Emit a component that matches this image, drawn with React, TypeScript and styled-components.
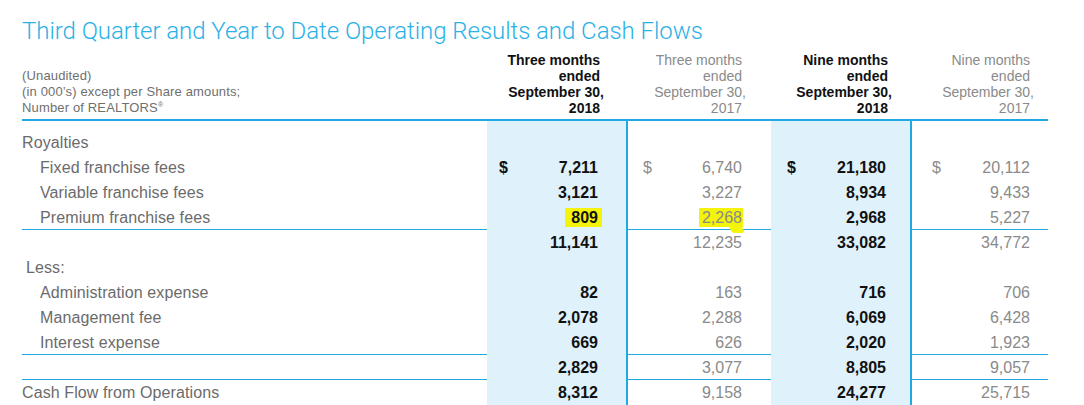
import styled, { createGlobalStyle } from "styled-components";

const GlobalStyle = createGlobalStyle`
  body {
    margin: 0;
    background: #ffffff;
    font-family: "Liberation Sans", Arial, sans-serif;
  }
`;

const BLUE = "#1fa9e1";
const BAND = "#dff1fb";
const COLS = "465px 141px 143px 141px 136px";

// per column: [padding-left, padding-right]
const PAD: [number, number][] = [
  [12, 28],
  [15, 29],
  [16, 24],
  [20, 18],
];

const Page = styled.div`
  padding: 19px 0 0 22px;
  width: 1026px;
  overflow: hidden;
  height: 386px;
`;

const Title = styled.h1`
  margin: 0;
  font-family: Roboto, "Liberation Sans", sans-serif;
  font-weight: 300;
  font-size: 24px;
  line-height: 24px;
  letter-spacing: -0.05px;
  color: #2ab1e6;
`;

const Head = styled.div`
  display: grid;
  grid-template-columns: ${COLS};
  margin-top: 9px;
  padding-bottom: 3px;
  border-bottom: 2px solid ${BLUE};
  align-items: end;
`;

const Caption = styled.div`
  font-size: 13px;
  line-height: 16px;
  color: #6f6f6f;
  letter-spacing: 0.15px;

  sup {
    font-size: 7px;
    line-height: 0;
    vertical-align: 5px;
  }
`;

const ColHead = styled.div<{ $col: number; $current?: boolean }>`
  text-align: right;
  font-size: 14px;
  line-height: 16px;
  padding-right: ${(p) => PAD[p.$col][1]}px;
  font-weight: ${(p) => (p.$current ? 700 : 400)};
  color: ${(p) => (p.$current ? "#111111" : "#8a8a8a")};
`;

const Hang = styled.span`
  margin-right: -4px;
`;

const Body = styled.div`
  display: flex;
  flex-direction: column;
`;

const Row = styled.div<{ $rule?: boolean; $h?: number }>`
  display: grid;
  grid-template-columns: ${COLS};
  height: ${(p) => p.$h ?? 25}px;
  box-sizing: border-box;
  border-bottom: ${(p) => (p.$rule ? `1px solid ${BLUE}` : "none")};
`;

const Label = styled.div<{ $indent?: number }>`
  font-size: 16px;
  line-height: 25px;
  letter-spacing: 0.1px;
  color: #6b6b6b;
  padding-left: ${(p) => p.$indent ?? 0}px;
  white-space: nowrap;
`;

const Cell = styled.div<{ $col: number }>`
  display: flex;
  align-items: center;
  box-sizing: border-box;
  padding: 0 ${(p) => PAD[p.$col][1]}px 0 ${(p) => PAD[p.$col][0]}px;
  font-size: 16px;
  line-height: 25px;
  white-space: nowrap;
  background: ${(p) => (p.$col % 2 === 0 ? BAND : "transparent")};
  border-right: ${(p) => (p.$col % 2 === 0 ? `2px solid ${BLUE}` : "none")};
  font-weight: ${(p) => (p.$col % 2 === 0 ? 700 : 400)};
  color: ${(p) => (p.$col % 2 === 0 ? "#111111" : "#8a8a8a")};
`;

const Dollar = styled.span``;

const Amount = styled.span`
  margin-left: auto;
`;

const Marker = styled.span<{ $tail?: boolean }>`
  position: relative;
  background: #f3f30c;
  padding: 1px 4px 1px 6px;
  margin-right: -4px;

  ${(p) =>
    p.$tail &&
    `
    padding: 1px 1px 1px 3px;
    margin-right: -1px;
    &::after {
      content: "";
      position: absolute;
      right: 0;
      bottom: -6px;
      width: 13px;
      height: 8px;
      background: #f3f30c;
      transform: skewX(25deg);
      border-radius: 0 0 3px 3px;
    }
  `}
`;

type Value = string | { v: string; mark?: "box" | "tail" };

interface Line {
  label: string;
  indent?: number;
  values?: Value[];
  dollar?: boolean;
  rule?: boolean;
}

const lines: Line[] = [
  { label: "Royalties" },
  { label: "Fixed franchise fees", indent: 18, values: ["7,211", "6,740", "21,180", "20,112"], dollar: true },
  { label: "Variable franchise fees", indent: 18, values: ["3,121", "3,227", "8,934", "9,433"] },
  {
    label: "Premium franchise fees",
    indent: 18,
    values: [{ v: "809", mark: "box" }, { v: "2,268", mark: "tail" }, "2,968", "5,227"],
    rule: true,
  },
  { label: "", values: ["11,141", "12,235", "33,082", "34,772"] },
  { label: "Less:", indent: 4 },
  { label: "Administration expense", indent: 18, values: ["82", "163", "716", "706"] },
  { label: "Management fee", indent: 18, values: ["2,078", "2,288", "6,069", "6,428"] },
  { label: "Interest expense", indent: 18, values: ["669", "626", "2,020", "1,923"], rule: true },
  { label: "", values: ["2,829", "3,077", "8,805", "9,057"], rule: true },
  { label: "Cash Flow from Operations", values: ["8,312", "9,158", "24,277", "25,715"] },
];

function renderValue(value: Value) {
  if (typeof value === "string") return value;
  return <Marker $tail={value.mark === "tail"}>{value.v}</Marker>;
}

function App() {
  return (
    <>
      <GlobalStyle />
      <Page>
        <Title>Third Quarter and Year to Date Operating Results and Cash Flows</Title>
        <Head>
          <Caption>
            (Unaudited)
            <br />
            (in 000’s) except per Share amounts;
            <br />
            Number of REALTORS<sup>®</sup>
          </Caption>
          <ColHead $col={0} $current>
            Three months
            <br />
            ended
            <br />
            September 30<Hang>,</Hang>
            <br />
            2018
          </ColHead>
          <ColHead $col={1}>
            Three months
            <br />
            ended
            <br />
            September 30<Hang>,</Hang>
            <br />
            2017
          </ColHead>
          <ColHead $col={2} $current>
            Nine months
            <br />
            ended
            <br />
            September 30<Hang>,</Hang>
            <br />
            2018
          </ColHead>
          <ColHead $col={3}>
            Nine months
            <br />
            ended
            <br />
            September 30<Hang>,</Hang>
            <br />
            2017
          </ColHead>
        </Head>
        <Body>
          <Row $h={9}>
            <div />
            {[0, 1, 2, 3].map((c) => (
              <Cell key={c} $col={c} />
            ))}
          </Row>
          {lines.map((line, i) => (
            <Row key={i} $rule={line.rule}>
              <Label $indent={line.indent}>{line.label}</Label>
              {[0, 1, 2, 3].map((c) => (
                <Cell key={c} $col={c}>
                  {line.dollar && <Dollar>$</Dollar>}
                  <Amount>{line.values ? renderValue(line.values[c]) : null}</Amount>
                </Cell>
              ))}
            </Row>
          ))}
        </Body>
      </Page>
    </>
  );
}

export default App;
